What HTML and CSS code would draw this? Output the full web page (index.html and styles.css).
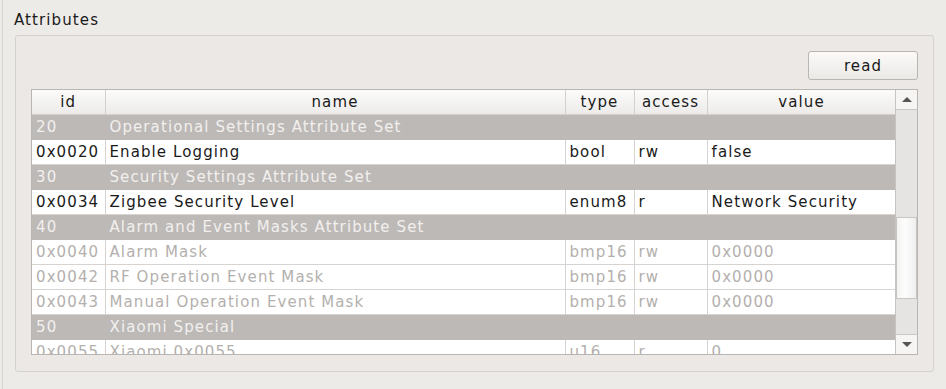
FILE: index.html
```html
<!DOCTYPE html>
<html lang="en">
<head>
  <meta charset="UTF-8" />
  <title>Attributes</title>
  <link rel="stylesheet" href="styles.css">
</head>
<body>
  <div class="window">
    <div class="title">Attributes</div>
    <div class="group">
      <div class="toolbar">
        <button class="btn">read</button>
      </div>
      <div class="view">
        <div class="table-wrap">
          <table class="attrs">
            <colgroup>
              <col style="width:73px"><col style="width:460px"><col style="width:69px"><col style="width:73px"><col style="width:189px">
            </colgroup>
            <thead>
              <tr><th>id</th><th>name</th><th>type</th><th>access</th><th>value</th></tr>
            </thead>
            <tbody>
              <tr class="set"><td>20</td><td colspan="4">Operational Settings Attribute Set</td></tr>
              <tr><td>0x0020</td><td>Enable Logging</td><td>bool</td><td>rw</td><td>false</td></tr>
              <tr class="set"><td>30</td><td colspan="4">Security Settings Attribute Set</td></tr>
              <tr><td>0x0034</td><td>Zigbee Security Level</td><td>enum8</td><td>r</td><td>Network Security</td></tr>
              <tr class="set"><td>40</td><td colspan="4">Alarm and Event Masks Attribute Set</td></tr>
              <tr class="off"><td>0x0040</td><td>Alarm Mask</td><td>bmp16</td><td>rw</td><td>0x0000</td></tr>
              <tr class="off"><td>0x0042</td><td>RF Operation Event Mask</td><td>bmp16</td><td>rw</td><td>0x0000</td></tr>
              <tr class="off"><td>0x0043</td><td>Manual Operation Event Mask</td><td>bmp16</td><td>rw</td><td>0x0000</td></tr>
              <tr class="set"><td>50</td><td colspan="4">Xiaomi Special</td></tr>
              <tr class="off"><td>0x0055</td><td>Xiaomi 0x0055</td><td>u16</td><td>r</td><td>0</td></tr>
            </tbody>
          </table>
        </div>
        <div class="scrollbar">
          <div class="arrow up"></div>
          <div class="track">
            <div class="gap-top"></div>
            <div class="handle"></div>
            <div class="gap-bottom"></div>
          </div>
          <div class="arrow down"></div>
        </div>
      </div>
    </div>
  </div>
</body>
</html>
```

FILE: styles.css
```css
body {
  margin: 0;
  background: #edebe8;
  font-family: "DejaVu Sans", sans-serif;
  font-size: 15px;
  letter-spacing: 1.1px;
  color: #1a1a1a;
}
.window {
  height: 389px;
  padding: 0 12px 0 12px;
  box-sizing: border-box;
  border-left: 1px solid #d8d5d2;
  margin-left: 2px;
}
.title {
  height: 35px;
  line-height: 40px;
  margin-left: -1px;
}
.group {
  height: 337px;
  box-sizing: border-box;
  border: 1px solid #d4d1cd;
  border-radius: 3px;
  background: #ebe8e5;
  padding: 15px 15px 0 15px;
}
.toolbar {
  display: flex;
  justify-content: flex-end;
  height: 38px;
}
.btn {
  width: 110px;
  height: 29px;
  font-family: "DejaVu Sans", sans-serif;
  font-size: 15px;
  letter-spacing: 1.1px;
  color: #1a1a1a;
  background: linear-gradient(#fbfaf9, #ebe9e6);
  border: 1px solid #b9b5b1;
  border-radius: 3px;
  padding: 0;
}
.view {
  display: flex;
  height: 266px;
  box-sizing: border-box;
  border: 1px solid #b8b5b2;
  background: #ffffff;
}
.table-wrap {
  width: 864px;
  overflow: hidden;
}
.attrs {
  border-collapse: collapse;
  table-layout: fixed;
  width: 864px;
}
.attrs th {
  height: 24px;
  padding: 0;
  font-weight: normal;
  background: linear-gradient(#fbfbfa, #ecebe9);
  border-right: 1px solid #d3d0cd;
  border-bottom: 1px solid #d3d0cd;
  text-align: center;
}
.attrs td {
  height: 24px;
  padding: 0 0 0 4px;
  border: 1px solid #d6d3d0;
  border-top: none;
  white-space: nowrap;
  overflow: hidden;
}
.attrs td:first-child {
  border-left: none;
}
.attrs tr.set td {
  background: #bdb9b7;
  color: #f2f0ee;
  border-color: #bdb9b7;
}
.attrs tr.off td {
  color: #b3b0ad;
}
.scrollbar {
  width: 21px;
  display: flex;
  flex-direction: column;
  border-left: 1px solid #c6c3c0;
  background: #f4f3f2;
}
.arrow {
  height: 19px;
  display: flex;
  align-items: center;
  justify-content: center;
  background: #f6f5f4;
}
.arrow.up {
  border-bottom: 1px solid #c9c6c3;
}
.arrow.down {
  border-top: 1px solid #c9c6c3;
}
.arrow.up::after {
  content: "";
  border-left: 5px solid transparent;
  border-right: 5px solid transparent;
  border-bottom: 5px solid #555;
}
.arrow.down::after {
  content: "";
  border-left: 5px solid transparent;
  border-right: 5px solid transparent;
  border-top: 5px solid #555;
}
.track {
  flex: 1;
  display: flex;
  flex-direction: column;
  background: #e6e4e2;
}
.gap-top {
  height: 107px;
}
.handle {
  height: 82px;
  box-sizing: border-box;
  border: 1px solid #c8c5c2;
  background: linear-gradient(90deg, #f4f3f2, #fdfdfd 40%, #f0efee);
}
.gap-bottom {
  flex: 1;
}
```
